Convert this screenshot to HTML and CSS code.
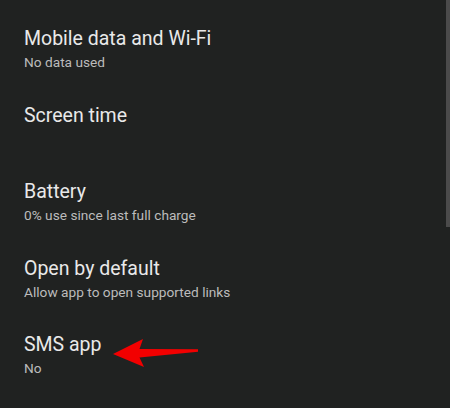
FILE: index.html
```html
<!DOCTYPE html>
<html lang="en">
<head>
    <meta charset="UTF-8">
    <meta name="viewport" content="width=device-width, initial-scale=1.0">
    <title>App info</title>
    <link rel="stylesheet" href="styles.css">
</head>
<body>
    <div class="screen">
        <ul class="prefs">
            <li class="pref">
                <div class="pref-title">Mobile data and Wi-Fi</div>
                <div class="pref-summary">No data used</div>
            </li>
            <li class="pref">
                <div class="pref-title">Screen time</div>
                <div class="pref-summary"></div>
            </li>
            <li class="pref">
                <div class="pref-title">Battery</div>
                <div class="pref-summary">0% use since last full charge</div>
            </li>
            <li class="pref">
                <div class="pref-title">Open by default</div>
                <div class="pref-summary">Allow app to open supported links</div>
            </li>
            <li class="pref">
                <div class="pref-title">SMS app</div>
                <div class="pref-summary">No</div>
            </li>
        </ul>
        <!-- scroll indicator -->
        <div class="scrollbar"></div>
        <!-- annotation arrow -->
        <svg class="arrow" width="450" height="408" viewBox="0 0 450 408">
            <polygon points="113,354 143,339 139.5,349 198,349.3 198,351.7 139.5,357.5 144,367" fill="#f20000"/>
        </svg>
    </div>
</body>
</html>
```

FILE: styles.css
```css
html, body {
    margin: 0;
    padding: 0;
    background-color: #202221;
}
.screen {
    position: relative;
    width: 450px;
    height: 408px;
    overflow: hidden;
    font-family: Roboto, "Noto Sans", sans-serif;
}
.prefs {
    list-style: none;
    margin: 0;
    padding: 27px 0 0 24px;
}
.pref {
    height: 76.5px;
    box-sizing: border-box;
}
.pref-title {
    font-size: 19.5px;
    line-height: 24px;
    color: #e9e9e9;
}
.pref-summary {
    margin-top: 1px;
    font-size: 13.7px;
    line-height: 20px;
    min-height: 20px;
    color: #bcbcbc;
}
.scrollbar {
    position: absolute;
    top: 0;
    right: 0;
    width: 4px;
    height: 227px;
    background-color: #4b4b4b;
}
.arrow {
    position: absolute;
    top: 0;
    left: 0;
}
```
